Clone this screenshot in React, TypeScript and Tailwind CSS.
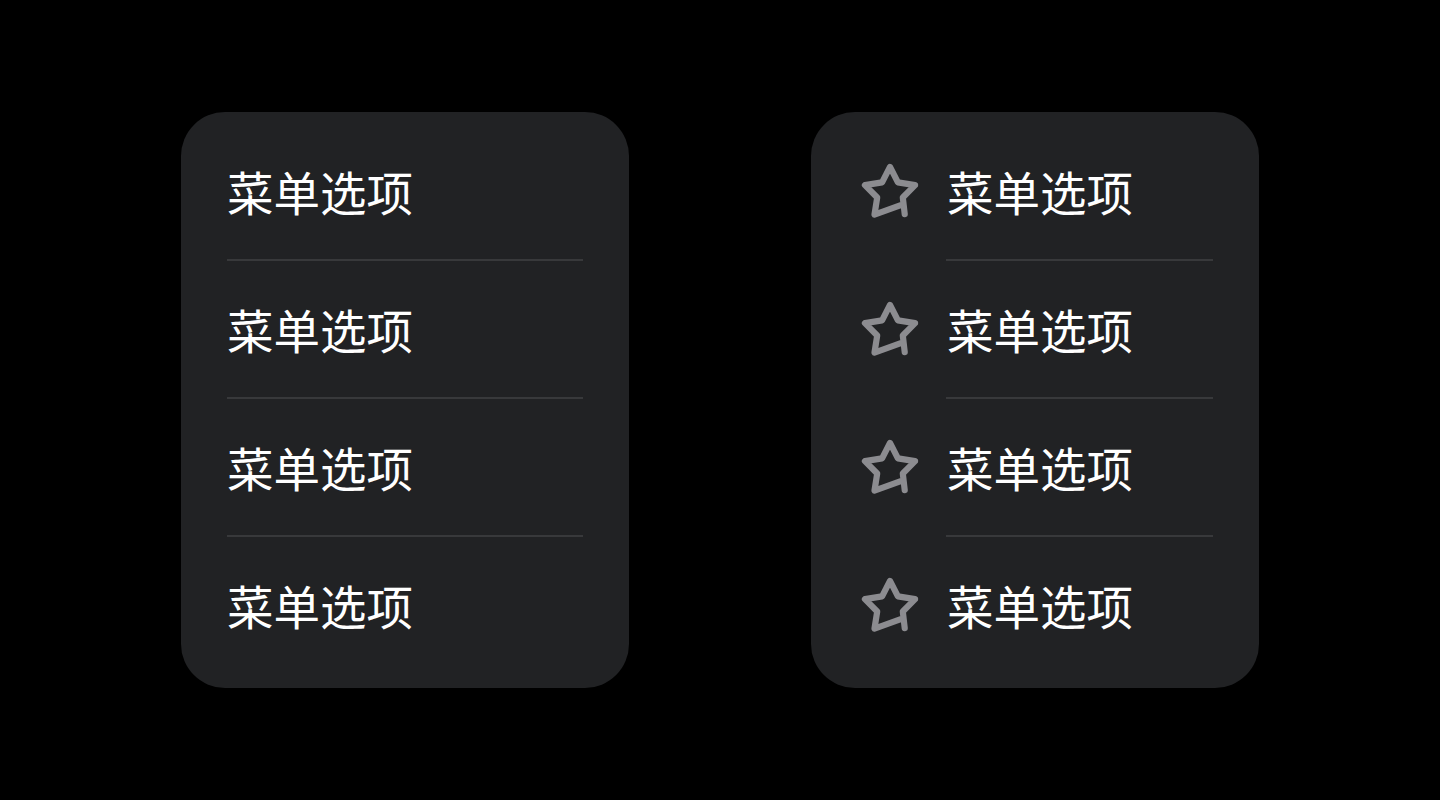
import React from 'react';

const items = ['菜单选项', '菜单选项', '菜单选项', '菜单选项'];

const font = { fontFamily: '"Noto Sans CJK SC", "Noto Sans", sans-serif' };

const StarIcon: React.FC = () => (
  <svg
    width={62}
    height={62}
    viewBox="0 0 24 24"
    fill="none"
    stroke="#8c8c90"
    strokeWidth={2.4}
    strokeLinejoin="round"
    strokeLinecap="round"
  >
    <path d="M12 2.3 L15.06 8.29 L21.7 9.35 L16.95 14.11 L17.7 20.6 L17.25 16.71 L6 20.75 L7.05 14.11 L2.3 9.35 L8.94 8.29 Z" />
  </svg>
);

const PlainMenu: React.FC = () => (
  <div className="w-[448px] rounded-[44px] bg-[#212224] px-[46px] pt-[11px] pb-[15px]">
    {items.map((label, i) => (
      <div key={i} className={i < items.length - 1 ? 'border-b-2 border-[#38393b]' : ''}>
        <div className="h-[136px] flex items-center">
          <span className="text-[46.5px] leading-none text-white" style={font}>
            {label}
          </span>
        </div>
      </div>
    ))}
  </div>
);

const IconMenu: React.FC = () => (
  <div className="w-[448px] rounded-[44px] bg-[#212224] px-[46px] pt-[11px] pb-[15px]">
    {items.map((label, i) => (
      <div key={i} className="flex">
        <div className="w-[89px] h-[136px] flex items-center pl-[2px] pt-[2px]">
          <StarIcon />
        </div>
        <div className={'flex-1 ' + (i < items.length - 1 ? 'border-b-2 border-[#38393b]' : '')}>
          <div className="h-[136px] flex items-center pl-[1px]">
            <span className="text-[46.5px] leading-none text-white" style={font}>
              {label}
            </span>
          </div>
        </div>
      </div>
    ))}
  </div>
);

export default function App() {
  return (
    <div className="w-full h-[800px] bg-black flex items-center justify-center gap-[182px]">
      <PlainMenu />
      <IconMenu />
    </div>
  );
}
